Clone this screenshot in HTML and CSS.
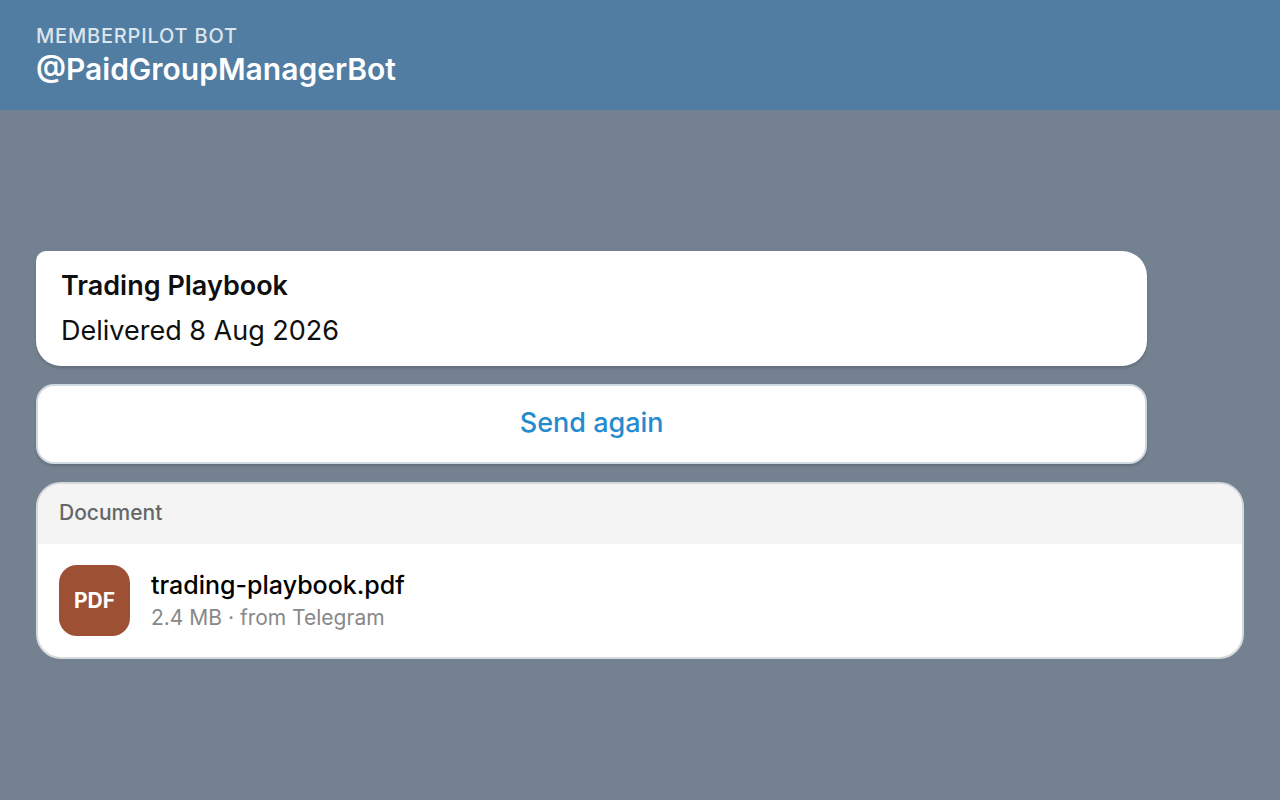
FILE: index.html
```html
<!DOCTYPE html>
<html lang="en">
<head>
<meta charset="utf-8">
<meta name="viewport" content="width=device-width, initial-scale=1">
<title>@PaidGroupManagerBot</title>
<link rel="stylesheet" href="styles.css">
</head>
<body>
<header class="topbar">
  <p class="topbar-label">MEMBERPILOT BOT</p>
  <h1 class="topbar-title">@PaidGroupManagerBot</h1>
</header>
<main class="chat">
  <section class="message">
    <h2 class="message-title">Trading Playbook</h2>
    <p class="message-text">Delivered 8 Aug 2026</p>
  </section>
  <button class="action" type="button">Send again</button>
  <section class="document">
    <h2 class="document-head">Document</h2>
    <div class="file">
      <span class="file-icon">PDF</span>
      <div class="file-info">
        <p class="file-name">trading-playbook.pdf</p>
        <p class="file-meta">2.4 MB · from Telegram</p>
      </div>
    </div>
  </section>
</main>
</body>
</html>
```
FILE: styles.css
```css
* {
  box-sizing: border-box;
}

body {
  margin: 0;
  min-height: 100vh;
  display: flex;
  flex-direction: column;
  background: #748190;
  color: #0f0f0f;
  font-family: Inter, "Liberation Sans", sans-serif;
}

h1, h2, p {
  margin: 0;
}

.topbar {
  padding: 24px 36px 20px;
  background: #517da2;
  color: #fff;
}

.topbar-label {
  font-size: 20px;
  line-height: 24px;
  font-weight: 500;
  letter-spacing: 0.04em;
  color: #dce5ec;
}

.topbar-title {
  font-size: 30px;
  line-height: 42px;
  font-weight: 600;
}

.chat {
  flex: 1;
  display: flex;
  flex-direction: column;
  justify-content: center;
  gap: 18px;
  padding: 35px 36px 36px;
}

.message {
  display: flex;
  flex-direction: column;
  gap: 2px;
  width: 92%;
  padding: 14px 25px 13px;
  border-radius: 10px 25px 25px 25px;
  background: #fff;
  box-shadow: 0 2px 3px rgba(0, 0, 0, 0.15);
}

.message-title,
.message-text {
  font-size: 27px;
}

.message-title {
  line-height: 42px;
  font-weight: 600;
}

.message-text {
  line-height: 44px;
}

.action {
  width: 92%;
  height: 80px;
  padding: 0 0 2px;
  border: 2px solid #d0d9e2;
  border-radius: 18px;
  background: #fff;
  color: #248bcf;
  font-family: inherit;
  font-size: 27px;
  font-weight: 500;
  box-shadow: 0 2px 3px rgba(0, 0, 0, 0.15);
}

.document {
  overflow: hidden;
  border: 2px solid #d5d9dc;
  border-radius: 25px;
  background: #fff;
}

.document-head {
  padding: 13px 21px 15px;
  background: #f4f4f4;
  color: #666;
  font-size: 21px;
  line-height: 32px;
  font-weight: 500;
}

.file {
  display: flex;
  align-items: center;
  gap: 21px;
  padding: 21px;
}

.file-icon {
  display: grid;
  place-items: center;
  width: 71px;
  height: 71px;
  border-radius: 18px;
  background: #9e5034;
  color: #fff;
  font-size: 21px;
  font-weight: 700;
}

.file-info {
  padding-top: 2px;
}

.file-name {
  color: #000;
  font-size: 25px;
  line-height: 34px;
  font-weight: 500;
}

.file-meta {
  color: #888;
  font-size: 21px;
  line-height: 32px;
}
```
